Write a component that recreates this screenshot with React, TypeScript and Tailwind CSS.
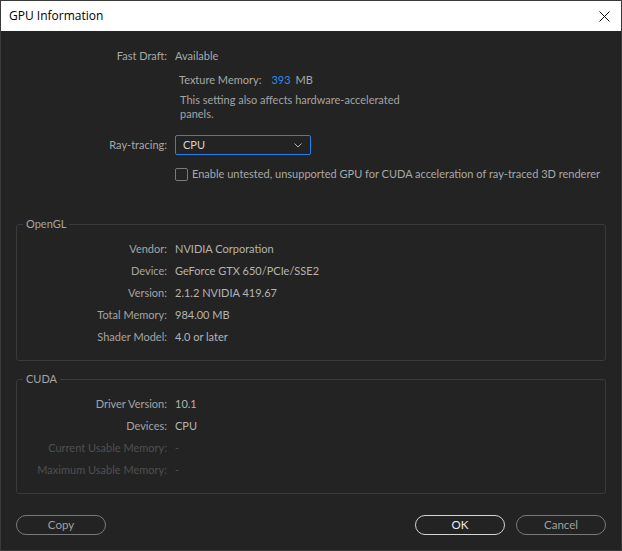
import React from "react";

type Row = { label: string; value: string; dim?: boolean };

const openGlRows: Row[] = [
  { label: "Vendor:", value: "NVIDIA Corporation" },
  { label: "Device:", value: "GeForce GTX 650/PCIe/SSE2" },
  { label: "Version:", value: "2.1.2 NVIDIA 419.67" },
  { label: "Total Memory:", value: "984.00 MB" },
  { label: "Shader Model:", value: "4.0 or later" },
];

const cudaRows: Row[] = [
  { label: "Driver Version:", value: "10.1" },
  { label: "Devices:", value: "CPU" },
  { label: "Current Usable Memory:", value: "-", dim: true },
  { label: "Maximum Usable Memory:", value: "-", dim: true },
];

function InfoRows({ rows }: { rows: Row[] }) {
  return (
    <div className="grid grid-cols-[150px_1fr] gap-x-[8px]">
      {rows.map((r) => (
        <React.Fragment key={r.label}>
          <div className={["h-[22px] leading-[22px] text-right", r.dim ? "text-[#505050]" : "text-[#a3a3a3]"].join(" ")}>
            {r.label}
          </div>
          <div className={["h-[22px] leading-[22px]", r.dim ? "text-[#505050]" : "text-[#b4b4b4]"].join(" ")}>
            {r.value}
          </div>
        </React.Fragment>
      ))}
    </div>
  );
}

function Group({ title, rows, className }: { title: string; rows: Row[]; className?: string }) {
  return (
    <fieldset className={["mx-[15px] rounded-[3px] border border-[#3a3a3a] px-0", className || ""].join(" ")}>
      <legend className="ml-[6px] px-[3px] leading-[16px] text-[#a3a3a3]">{title}</legend>
      <div className="pt-[6px] pb-[12px]">
        <InfoRows rows={rows} />
      </div>
    </fieldset>
  );
}

function PillButton({ label, primary }: { label: string; primary?: boolean }) {
  return (
    <button
      type="button"
      className={[
        "h-[20px] w-[90px] rounded-full border leading-[18px] text-[11.5px]",
        primary ? "border-[#d4d4d4] text-[#ececec]" : "border-[#7a7a7a] text-[#a0a0a0]",
      ].join(" ")}
    >
      {label}
    </button>
  );
}

export default function App() {
  return (
    <div className="w-[622px] h-[551px] border border-[#3a3a3a] bg-[#232323] flex flex-col font-['Lato',sans-serif] text-[11px] text-[#a8a8a8]">
      <div className="h-[30px] shrink-0 bg-white flex items-center justify-between pl-[8px] pr-[10px]">
        <span className="font-['Open_Sans',sans-serif] text-[12px] text-black">GPU Information</span>
        <svg width="11" height="11" viewBox="0 0 11 11" className="mr-[1px]">
          <path d="M0.5 0.5 L10.5 10.5 M10.5 0.5 L0.5 10.5" stroke="#111" strokeWidth="1" fill="none" />
        </svg>
      </div>

      <div className="flex-1 flex flex-col">
        {/* top settings */}
        <div className="pt-[17px] grid grid-cols-[166px_1fr] gap-x-[8px]">
          <div className="h-[16px] leading-[16px] text-right">Fast Draft:</div>
          <div className="h-[16px] leading-[16px]">Available</div>

          <div />
          <div className="mt-[8px] pl-[4px]">
            <div className="h-[16px] leading-[16px]">
              Texture Memory:
              <span className="ml-[10px] text-[#2d8ceb]">393</span>
              <span className="ml-[5px]">MB</span>
            </div>
            <div className="mt-[5px] pl-[1px] w-[236px] leading-[14px] text-[#a3a3a3]">
              This setting also affects hardware-accelerated panels.
            </div>
          </div>

          <div className="mt-[14px] h-[20px] leading-[20px] text-right">Ray-tracing:</div>
          <div className="mt-[14px]">
            <div className="h-[20px] w-[136px] rounded-[2px] border border-[#2680eb] flex items-center justify-between pl-[7px] pr-[8px] text-[#d2d2d2]">
              <span>CPU</span>
              <svg width="8" height="5" viewBox="0 0 8 5">
                <path d="M0.5 0.5 L4 4 L7.5 0.5" stroke="#b0b0b0" strokeWidth="1" fill="none" />
              </svg>
            </div>
          </div>

          <div />
          <div className="mt-[11px] h-[16px] flex items-center gap-[4px]">
            <span className="w-[13px] h-[13px] shrink-0 rounded-[2px] border border-[#7a7a7a]" />
            <span className="leading-[16px] whitespace-nowrap">
              Enable untested, unsupported GPU for CUDA acceleration of ray-traced 3D renderer
            </span>
          </div>
        </div>

        <Group title="OpenGL" rows={openGlRows} className="mt-[34px]" />
        <Group title="CUDA" rows={cudaRows} className="mt-[10px]" />

        <div className="mt-auto mb-[15px] flex items-center px-[15px]">
          <PillButton label="Copy" />
          <div className="flex-1" />
          <PillButton label="OK" primary />
          <div className="w-[11px]" />
          <PillButton label="Cancel" />
        </div>
      </div>
    </div>
  );
}
